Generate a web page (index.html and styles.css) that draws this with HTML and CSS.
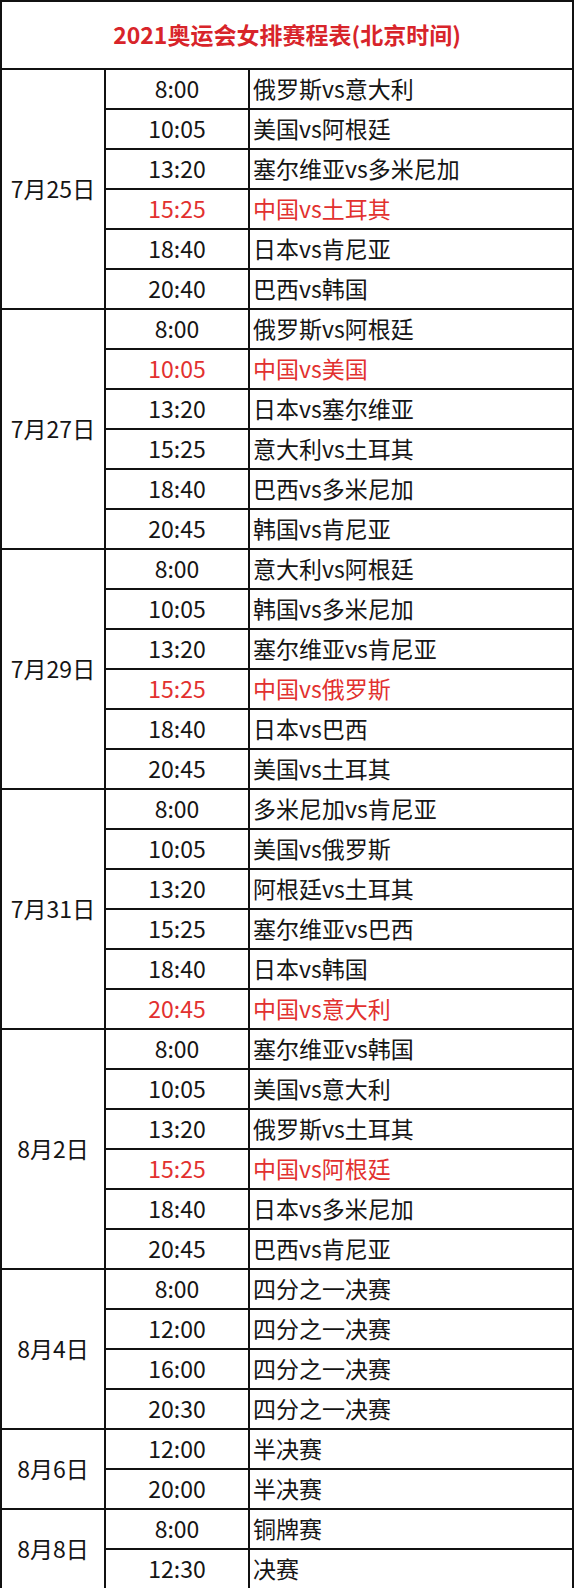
FILE: index.html
```html
<!DOCTYPE html>
<html lang="zh-CN">
<head>
<meta charset="utf-8">
<title>2021奥运会女排赛程表</title>
<link rel="stylesheet" href="styles.css">
</head>
<body>
<table class="schedule">
  <colgroup>
    <col class="c-date">
    <col class="c-time">
    <col class="c-match">
  </colgroup>
  <tr class="title-row"><td colspan="3" class="title">2021奥运会女排赛程表(北京时间)</td></tr>

  <tr><td class="date" rowspan="6">7月25日</td><td class="time">8:00</td><td class="match">俄罗斯vs意大利</td></tr>
  <tr><td class="time">10:05</td><td class="match">美国vs阿根廷</td></tr>
  <tr><td class="time">13:20</td><td class="match">塞尔维亚vs多米尼加</td></tr>
  <tr class="cn"><td class="time">15:25</td><td class="match">中国vs土耳其</td></tr>
  <tr><td class="time">18:40</td><td class="match">日本vs肯尼亚</td></tr>
  <tr><td class="time">20:40</td><td class="match">巴西vs韩国</td></tr>

  <tr><td class="date" rowspan="6">7月27日</td><td class="time">8:00</td><td class="match">俄罗斯vs阿根廷</td></tr>
  <tr class="cn"><td class="time">10:05</td><td class="match">中国vs美国</td></tr>
  <tr><td class="time">13:20</td><td class="match">日本vs塞尔维亚</td></tr>
  <tr><td class="time">15:25</td><td class="match">意大利vs土耳其</td></tr>
  <tr><td class="time">18:40</td><td class="match">巴西vs多米尼加</td></tr>
  <tr><td class="time">20:45</td><td class="match">韩国vs肯尼亚</td></tr>

  <tr><td class="date" rowspan="6">7月29日</td><td class="time">8:00</td><td class="match">意大利vs阿根廷</td></tr>
  <tr><td class="time">10:05</td><td class="match">韩国vs多米尼加</td></tr>
  <tr><td class="time">13:20</td><td class="match">塞尔维亚vs肯尼亚</td></tr>
  <tr class="cn"><td class="time">15:25</td><td class="match">中国vs俄罗斯</td></tr>
  <tr><td class="time">18:40</td><td class="match">日本vs巴西</td></tr>
  <tr><td class="time">20:45</td><td class="match">美国vs土耳其</td></tr>

  <tr><td class="date" rowspan="6">7月31日</td><td class="time">8:00</td><td class="match">多米尼加vs肯尼亚</td></tr>
  <tr><td class="time">10:05</td><td class="match">美国vs俄罗斯</td></tr>
  <tr><td class="time">13:20</td><td class="match">阿根廷vs土耳其</td></tr>
  <tr><td class="time">15:25</td><td class="match">塞尔维亚vs巴西</td></tr>
  <tr><td class="time">18:40</td><td class="match">日本vs韩国</td></tr>
  <tr class="cn"><td class="time">20:45</td><td class="match">中国vs意大利</td></tr>

  <tr><td class="date" rowspan="6">8月2日</td><td class="time">8:00</td><td class="match">塞尔维亚vs韩国</td></tr>
  <tr><td class="time">10:05</td><td class="match">美国vs意大利</td></tr>
  <tr><td class="time">13:20</td><td class="match">俄罗斯vs土耳其</td></tr>
  <tr class="cn"><td class="time">15:25</td><td class="match">中国vs阿根廷</td></tr>
  <tr><td class="time">18:40</td><td class="match">日本vs多米尼加</td></tr>
  <tr><td class="time">20:45</td><td class="match">巴西vs肯尼亚</td></tr>

  <tr><td class="date" rowspan="4">8月4日</td><td class="time">8:00</td><td class="match">四分之一决赛</td></tr>
  <tr><td class="time">12:00</td><td class="match">四分之一决赛</td></tr>
  <tr><td class="time">16:00</td><td class="match">四分之一决赛</td></tr>
  <tr><td class="time">20:30</td><td class="match">四分之一决赛</td></tr>

  <tr><td class="date" rowspan="2">8月6日</td><td class="time">12:00</td><td class="match">半决赛</td></tr>
  <tr><td class="time">20:00</td><td class="match">半决赛</td></tr>

  <tr><td class="date" rowspan="2">8月8日</td><td class="time">8:00</td><td class="match">铜牌赛</td></tr>
  <tr><td class="time">12:30</td><td class="match">决赛</td></tr>
</table>
</body>
</html>
```

FILE: styles.css
```css
html, body {
  margin: 0;
  padding: 0;
  background: #ffffff;
}

.schedule {
  width: 574px;
  table-layout: fixed;
  border-collapse: collapse;
  font-family: "Noto Sans CJK SC", "Microsoft YaHei", sans-serif;
  color: #151515;
  font-size: 23px;
}

.c-date { width: 104px; }
.c-time { width: 144px; }

.schedule td {
  border: 2px solid #111;
  padding: 0 0 2px 0;
  height: 36px;
  line-height: 26px;
  white-space: nowrap;
}

.schedule tr { height: 40px; }

.schedule .title-row { height: 68px; }

.schedule td.title {
  height: 64px;
  text-align: center;
  color: #d8242a;
  font-weight: bold;
  font-size: 23px;
}

.date {
  text-align: center;
  vertical-align: middle;
}

.time {
  text-align: center;
}

.schedule td.match {
  padding-left: 3px;
  text-align: left;
}

.cn .time,
.cn .match {
  color: #e2312f;
}
```
